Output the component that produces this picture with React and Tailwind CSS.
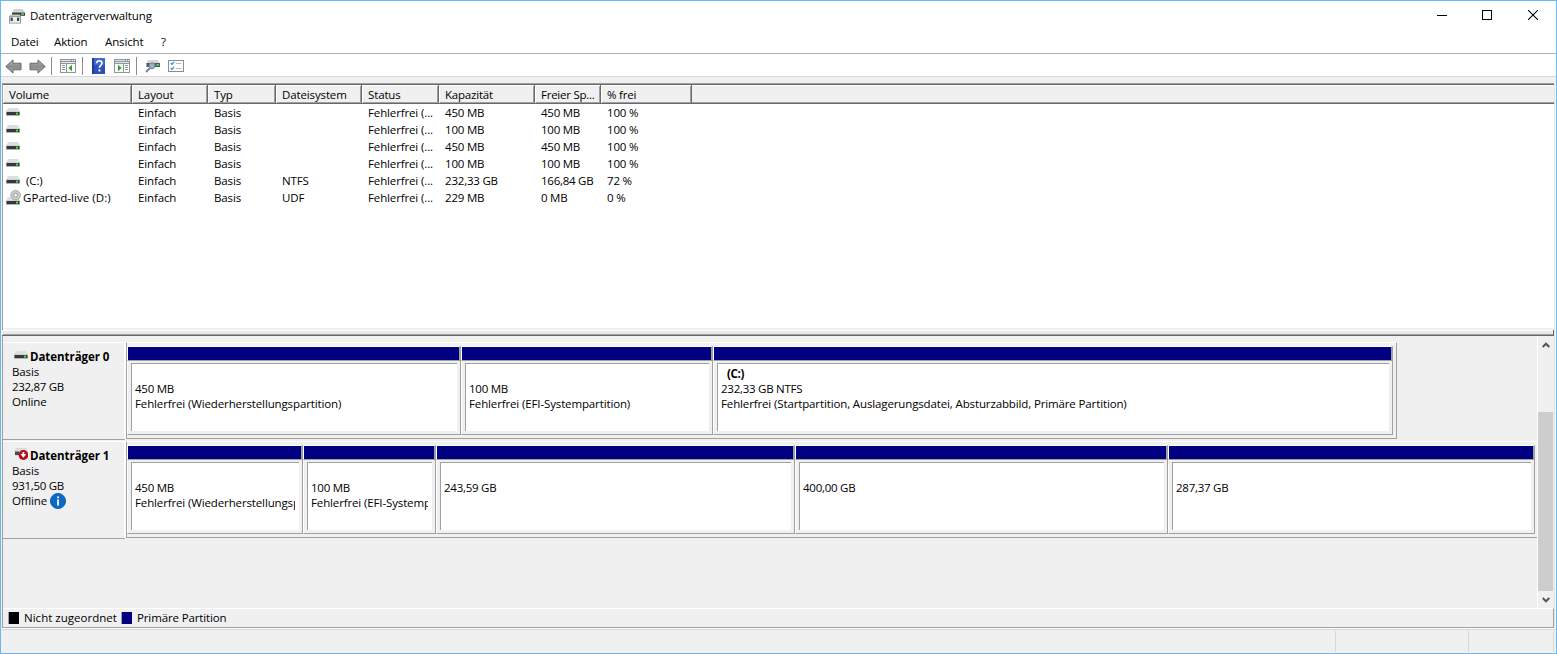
import React from "react";

const DriveIcon = ({ className = "" }) => (
  <svg width="14" height="8" viewBox="0 0 14 8" className={"block shrink-0 " + className}>
    <path d="M2 0h10l2 4H0z" fill="#dcdee1" />
    <rect x="0" y="3" width="14" height="5" fill="#d0d3d6" />
    <rect x="0.5" y="4" width="13" height="3.2" fill="#383838" />
    <rect x="10" y="4.6" width="2" height="1.9" fill="#3df03d" />
  </svg>
);

const DiscDriveIcon = () => (
  <svg width="16" height="16" viewBox="0 0 16 16" className="block shrink-0">
    <path d="M2 7h10l2 4H0z" fill="#dcdee1" />
    <rect x="0" y="10" width="14" height="5" fill="#d0d3d6" />
    <rect x="0.5" y="11" width="13" height="3.2" fill="#383838" />
    <rect x="10" y="11.6" width="2" height="1.9" fill="#3df03d" />
    <circle cx="9.6" cy="5.2" r="4.8" fill="#cdcdcd" stroke="#9c9c9c" strokeWidth="0.8" />
    <circle cx="9.6" cy="5.2" r="1.9" fill="#fff" stroke="#989898" strokeWidth="1" />
  </svg>
);

const OfflineIcon = () => (
  <svg width="14" height="12" viewBox="0 0 14 12" className="block shrink-0">
    <path d="M2 0h10l2 4H0z" fill="#d8dadc" />
    <rect x="1" y="3.5" width="4" height="3.6" fill="#4a4a4a" />
    <circle cx="9.4" cy="7" r="4.9" fill="#b0101c" />
    <path d="M8.5 4h1.8v2.1h2L9.4 9.8 6.5 6.1h2z" fill="#fff" />
  </svg>
);

const AppIcon = () => (
  <svg width="16" height="15" viewBox="0 0 16 15" className="block">
    <path d="M5 0h9l2 4H3z" fill="#cfd1d4" />
    <rect x="3" y="3.6" width="13" height="3.2" fill="#3a3a3a" />
    <rect x="12" y="4.3" width="3" height="1.6" fill="#3ee63e" />
    <path d="M1 5.6h9.5l1.5 2H0z" fill="#c3c5c7" />
    <rect x="0" y="7" width="12" height="7.5" fill="#8b8b8b" />
    <rect x="0.8" y="7.8" width="10.4" height="6" fill="#ececec" />
    <rect x="1.6" y="8.6" width="2.2" height="3.4" fill="#444" />
    <rect x="8" y="8.6" width="2.2" height="3.4" fill="#444" />
  </svg>
);

const Arrow = ({ flip }) => (
  <svg width="17" height="15" viewBox="0 0 17 15" className={flip ? "block -scale-x-100" : "block"}>
    <defs>
      <linearGradient id="ag" x1="0" y1="0" x2="0" y2="1">
        <stop offset="0" stopColor="#b5b5b5" />
        <stop offset="0.5" stopColor="#8c8c8c" />
        <stop offset="1" stopColor="#a8a8a8" />
      </linearGradient>
    </defs>
    <path d="M.8 7.5L8 .9v3.3h8v6.6H8v3.3z" fill="url(#ag)" stroke="#686868" strokeWidth="1" strokeLinejoin="round" />
  </svg>
);

const PanelIcon = ({ right }) => (
  <svg width="16" height="14" viewBox="0 0 16 14" shapeRendering="crispEdges" className="block">
    <rect x="0" y="0" width="16" height="14" fill="#8f959e" />
    <rect x="1" y="1" width="10" height="1" fill="#dfe2e8" />
    <rect x="12" y="1" width="1" height="1" fill="#fff" />
    <rect x="14" y="1" width="1" height="1" fill="#fff" />
    <rect x="1" y="3" width="14" height="1" fill="#e4e7ec" />
    <rect x="1" y="5" width="14" height="8" fill="#fbfbfb" />
    {right ? (
      <g>
        <rect x="9" y="5" width="1" height="8" fill="#8f959e" />
        <path d="M11 6h3v1h-3zM11 8h3v1h-3zM11 10h3v1h-3z" fill="#8b95a5" />
        <path d="M4 5.8l3.6 3.2L4 12.2z" fill="#2fa42a" shapeRendering="auto" />
      </g>
    ) : (
      <g>
        <rect x="6" y="5" width="1" height="8" fill="#8f959e" />
        <path d="M2 6h3v1H2zM2 8h3v1H2zM2 10h3v1H2z" fill="#8b95a5" />
        <path d="M12 5.8L8.4 9l3.6 3.2z" fill="#2fa42a" shapeRendering="auto" />
      </g>
    )}
  </svg>
);

const HelpIcon = () => (
  <svg width="13" height="16" viewBox="0 0 13 16" className="block">
    <rect width="13" height="16" fill="#2f50b8" />
    <rect width="2" height="16" fill="#223d94" />
    <rect x="2" width="11" height="7" fill="#4168cf" />
    <path d="M4.6 5.2C4.6 3.4 5.8 2.8 7.3 2.8s2.7.9 2.7 2.4c0 2-2.6 2.4-2.6 4.6" fill="none" stroke="#fff" strokeWidth="1.6" />
    <rect x="6.5" y="11.4" width="1.9" height="2" fill="#fff" />
  </svg>
);

const ScanIcon = () => (
  <svg width="15" height="14" viewBox="0 0 15 14" className="block">
    <path d="M3 1h10l2 3.4H1z" fill="#d5d7da" />
    <rect x="1.5" y="4" width="13.5" height="4" fill="#53575b" />
    <rect x="11.5" y="5" width="2.4" height="1.8" fill="#3df03d" />
    <path d="M5 9L1 13" stroke="#6d8292" strokeWidth="1.8" />
    <circle cx="7" cy="6.8" r="3" fill="#93b3c9" stroke="#6f8799" strokeWidth="1" />
  </svg>
);

const ListIcon = () => (
  <svg width="16" height="12" viewBox="0 0 16 12" className="block">
    <rect x=".5" y=".5" width="15" height="11" fill="#fdfdfd" stroke="#8a8d91" />
    <path d="M2.8 3l1.2 1.4L6.2 1.8M2.8 8l1.2 1.4 2.2-2.6" fill="none" stroke="#2f8be0" strokeWidth="1.2" />
    <path d="M8 3.5h5.5M8 8.5h5.5" stroke="#b9bcc0" />
  </svg>
);

const InfoIcon = () => (
  <svg width="16" height="16" viewBox="0 0 16 16" className="block">
    <circle cx="8" cy="8" r="7.6" fill="#0b6ac8" stroke="#0a4f9b" strokeWidth=".8" />
    <rect x="7.2" y="3.4" width="1.7" height="1.8" fill="#fff" />
    <rect x="7.2" y="6.4" width="1.7" height="6.2" fill="#fff" />
  </svg>
);

const columns = [
  { label: "Volume", w: "w-[129px]" },
  { label: "Layout", w: "w-[76px]" },
  { label: "Typ", w: "w-[68px]" },
  { label: "Dateisystem", w: "w-[86px]" },
  { label: "Status", w: "w-[77px]" },
  { label: "Kapazität", w: "w-[96px] tracking-[-0.2px]" },
  { label: "Freier Sp...", w: "w-[66px] tracking-[-0.25px]" },
  { label: "% frei", w: "w-[91px] tracking-[-0.2px]" },
];

const volumes = [
  ["", "Einfach", "Basis", "", "Fehlerfrei (...", "450 MB", "450 MB", "100 %"],
  ["", "Einfach", "Basis", "", "Fehlerfrei (...", "100 MB", "100 MB", "100 %"],
  ["", "Einfach", "Basis", "", "Fehlerfrei (...", "450 MB", "450 MB", "100 %"],
  ["", "Einfach", "Basis", "", "Fehlerfrei (...", "100 MB", "100 MB", "100 %"],
  ["(C:)", "Einfach", "Basis", "NTFS", "Fehlerfrei (...", "232,33 GB", "166,84 GB", "72 %"],
  ["GParted-live (D:)", "Einfach", "Basis", "UDF", "Fehlerfrei (...", "229 MB", "0 MB", "0 %"],
];

const disks = [
  {
    name: "Datenträger 0",
    size: "232,87 GB",
    state: "Online",
    track: "w-[1271px] border-r",
    parts: [
      { w: "w-[334px]", size: "450 MB", status: "Fehlerfrei (Wiederherstellungspartition)" },
      { w: "w-[252px]", size: "100 MB", status: "Fehlerfrei (EFI-Systempartition)" },
      {
        w: "w-[680px]",
        title: "(C:)",
        size: "232,33 GB NTFS",
        status: "Fehlerfrei (Startpartition, Auslagerungsdatei, Absturzabbild, Primäre Partition)",
      },
    ],
  },
  {
    name: "Datenträger 1",
    size: "931,50 GB",
    state: "Offline",
    offline: true,
    track: "w-[1411px]",
    parts: [
      { w: "w-[176px]", size: "450 MB", status: "Fehlerfrei (Wiederherstellungspartition)" },
      { w: "w-[133px]", size: "100 MB", status: "Fehlerfrei (EFI-Systempartition)" },
      { w: "w-[359px]", size: "243,59 GB" },
      { w: "w-[373px]", size: "400,00 GB" },
      { w: "w-[367px]", size: "287,37 GB" },
    ],
  },
];

const Partition = ({ part }) => (
  <div className={"flex h-[89px] shrink-0 flex-col " + part.w}>
    <div className="h-[14px] border-t border-r-2 border-l border-t-white border-r-[#a0a0a0] border-l-white bg-[#000080]" />
    <div className="flex h-[75px] flex-col border-y border-r border-l border-[#a0a0a0] border-l-white pt-[2px] pr-[3px] pb-[3px] pl-[3px]">
      <div className="h-[68px] overflow-hidden border-t border-l border-[#a0a0a0] bg-white pr-[4px] pl-[3px]">
        <div className="overflow-hidden pt-[2px] whitespace-nowrap">
          <div className="h-[15px] pl-[6px] leading-[15px] font-bold tracking-[-0.3px]">{part.title}</div>
          <div className="h-[15px] leading-[15px] tracking-[-0.25px]">{part.size}</div>
          <div className="h-[16px] leading-[16px]">{part.status}</div>
        </div>
      </div>
    </div>
  </div>
);

const DiskRow = ({ disk }) => (
  <div className="flex h-[99px]">
    <div className="flex h-[98px] w-[123px] shrink-0 flex-col border-t border-r-2 border-b border-t-white border-r-white border-b-[#a0a0a0] pt-[6px] pl-[9px] leading-[15px]">
      <div className="flex h-[15px] items-start">
        <div className="w-[18px] pl-[2px]">
          {disk.offline ? <OfflineIcon /> : <DriveIcon className="mt-[2px]" />}
        </div>
        <span className="font-bold tracking-[-0.05px] whitespace-nowrap">{disk.name}</span>
      </div>
      <div>Basis</div>
      <div className="tracking-[-0.3px]">{disk.size}</div>
      <div className="flex">
        {disk.state}
        {disk.offline && (
          <span className="ml-[3px]">
            <InfoIcon />
          </span>
        )}
      </div>
    </div>
    <div className={"flex h-[97px] shrink-0 border-t border-b border-l border-[#a0a0a0] border-t-white pt-[3px] " + disk.track}>
      {disk.parts.map((p, i) => (
        <Partition key={i} part={p} />
      ))}
    </div>
  </div>
);

const ToolSep = ({ className }) => <div className={"h-[18px] w-px bg-[#8d8d8d] " + className} />;

const Chevron = ({ down }) => (
  <svg width="8" height="6" viewBox="0 0 8 6" className={down ? "block rotate-180" : "block"}>
    <path d="M.7 5L4 1.7 7.3 5" fill="none" stroke="#555" strokeWidth="2" />
  </svg>
);

export default function App() {
  return (
    <div className="flex h-[654px] w-[1557px] flex-col overflow-hidden border border-[#6bb8ec] bg-[#f0f0f0] font-['Open_Sans','Noto_Sans',sans-serif] text-[11.5px] tracking-[-0.13px] text-black">
      <div className="flex h-[31px] items-center bg-white">
        <div className="w-[29px] pl-[8px]">
          <AppIcon />
        </div>
        <span className="flex-1 pb-[2px]">Datenträgerverwaltung</span>
        <svg width="10" height="10" viewBox="0 0 10 10" className="mr-[35px] mb-[3px]">
          <rect y="5" width="10" height="1" />
        </svg>
        <svg width="10" height="10" viewBox="0 0 10 10" className="mr-[36px] mb-[3px]">
          <rect x=".5" y=".5" width="9" height="9" fill="none" stroke="#000" />
        </svg>
        <svg width="10" height="10" viewBox="0 0 10 10" className="mr-[18px] mb-[3px]">
          <path d="M0 0l10 10M10 0L0 10" stroke="#000" strokeWidth="1.1" />
        </svg>
      </div>
      <div className="flex h-[22px] shrink-0 items-center border-b border-[#aeb2bb] bg-white pb-[2px]">
        <span className="w-[43px] pl-[10px]">Datei</span>
        <span className="w-[51px] pl-[10px]">Aktion</span>
        <span className="w-[56px] pl-[10px]">Ansicht</span>
        <span className="pl-[10px]">?</span>
      </div>
      <div className="flex h-[23px] shrink-0 items-center border-b border-[#d9d9d9] bg-white pt-[2px] pl-[4px]">
        <Arrow />
        <span className="ml-[7px]">
          <Arrow flip />
        </span>
        <ToolSep className="ml-[5px]" />
        <span className="ml-[8px]">
          <PanelIcon />
        </span>
        <ToolSep className="ml-[6px]" />
        <span className="ml-[9px]">
          <HelpIcon />
        </span>
        <span className="ml-[9px]">
          <PanelIcon right />
        </span>
        <ToolSep className="ml-[6px]" />
        <span className="ml-[8px]">
          <ScanIcon />
        </span>
        <span className="ml-[8px]">
          <ListIcon />
        </span>
      </div>
      <div className="mt-[6px] ml-px w-[1552px] shadow-[1px_0_0_#e3e3e3,2px_0_0_#fff]">
        <div className="flex h-[247px] shrink-0 flex-col border-t border-l border-[#a0a0a0]">
          <div className="flex h-[20px] shrink-0 border-t border-b border-[#696969] shadow-[inset_0_1px_0_#fff,inset_0_-1px_0_#a0a0a0]">
            {columns.map((c) => (
              <div
                key={c.label}
                className={
                  "flex h-[18px] items-center border-r border-[#696969] pt-[2px] pl-[6px] whitespace-nowrap shadow-[inset_1px_1px_0_#fff,inset_-1px_-1px_0_#a0a0a0] " +
                  c.w
                }
              >
                {c.label}
              </div>
            ))}
          </div>
          <div className="flex h-[224px] shrink-0 flex-col bg-white">
            {volumes.map((row, r) => (
              <div key={r} className="flex h-[17px] shrink-0 items-center whitespace-nowrap">
                {row.map((cell, i) =>
                  i === 0 ? (
                    <div key={i} className="flex h-[17px] w-[129px] items-center pl-[3px]">
                      {r === 5 ? <DiscDriveIcon /> : <DriveIcon className="mb-px" />}
                      <span className={r === 5 ? "ml-px tracking-[0.05px]" : "ml-[6px]"}>{cell}</span>
                    </div>
                  ) : (
                    <div key={i} className={"pl-[6px] " + columns[i].w}>
                      {cell}
                    </div>
                  )
                )}
              </div>
            ))}
          </div>
        </div>
        <div className="flex h-[6px] shrink-0 flex-col border-r border-b border-[#696969] pl-px">
          <div className="h-px bg-white" />
          <div className="h-[3px] bg-[#e9e9e9]" />
          <div className="h-px bg-[#a0a0a0]" />
        </div>
        <div className="flex h-[292px] shrink-0 flex-col border-b border-l border-[#a0a0a0]">
          <div className="flex h-[272px]">
            <div className="w-[1534px] shrink-0 pt-[6px]">
              {disks.map((d) => (
                <DiskRow key={d.name} disk={d} />
              ))}
            </div>
            <div className="flex w-[17px] shrink-0 flex-col items-center border-l border-white pr-px">
              <div className="flex h-[76px] pt-[6px]">
                <Chevron />
              </div>
              <div className="h-[179px] w-[15px] bg-[#cdcdcd]" />
              <div className="pt-[6px]">
                <Chevron down />
              </div>
            </div>
          </div>
          <div className="flex h-[19px] items-center border-t border-r border-t-white border-r-[#a0a0a0] pl-[5px]">
            <div className="h-[12px] w-[11px] border-l border-[#a0a0a0] bg-black" />
            <span className="w-[102px] pl-[5px] tracking-[0.02px] whitespace-nowrap">Nicht zugeordnet</span>
            <div className="h-[12px] w-[11px] border-l border-[#a0a0a0] bg-[#000080]" />
            <span className="pl-[5px]">Primäre Partition</span>
          </div>
        </div>
      </div>
      <div className="flex h-[25px] shrink-0 flex-col border-t border-white">
        <div className="flex h-[24px] border-t border-[#d7d7d7]">
          <div className="my-px w-[1335px] border-r border-[#d7d7d7]" />
          <div className="my-px w-[133px] border-r border-[#d7d7d7]" />
          <div className="my-px w-[85px] border-r border-[#d7d7d7]" />
        </div>
      </div>
    </div>
  );
}
